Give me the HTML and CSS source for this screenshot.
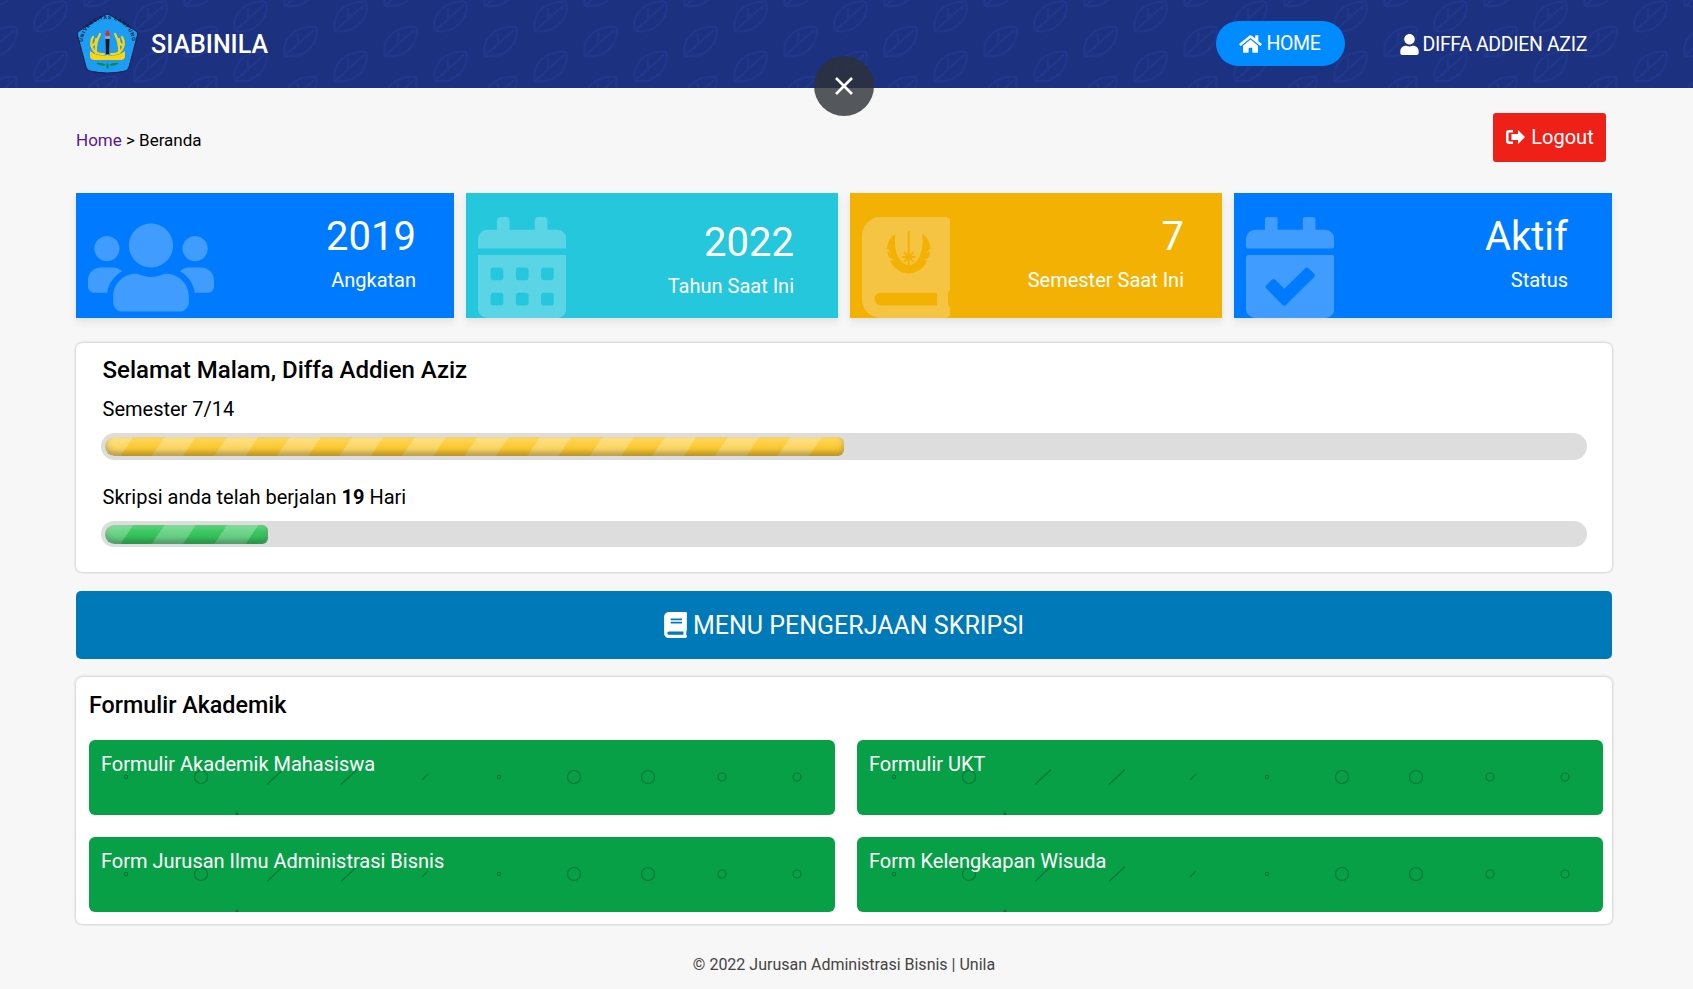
FILE: index.html
```html
<!DOCTYPE html>
<html lang="id">
<head>
<meta charset="utf-8">
<title>SIABINILA</title>
<link rel="stylesheet" href="styles.css">
</head>
<body>
<header class="topbar">
  <div class="brand">
    <svg class="logo" viewBox="0 0 63 62">
      <path d="M29 2Q31.500 0.500 34 2L60 18Q62 19.500 61.500 22L53 54Q52 57.500 49 58Q31.500 62 14 58Q11 57.500 10 54L1.500 22Q1 19.500 3 18Z" fill="#1c9cf2" stroke="#14204a" stroke-width="1"/>
      <defs><path id="logoArc" d="M7.500 38A25 25 0 1 1 55.500 38"/></defs>
      <text class="logo-text"><textPath href="#logoArc" startOffset="50%" text-anchor="middle">UNIVERSITAS LAMPUNG</textPath></text>
      <path class="antler" d="M28 41Q18 42 15.500 33Q14.500 28 17 24M20 40Q19 30 24 21M16 33Q20 31 20 26M35 41Q45 42 47.500 33Q48.500 28 46 24M43 40Q44 30 39 21M47 33Q43 31 43 26"/>
      <path d="M14 38Q22 44 31.500 42Q41 44 49 38V44Q48 47 45 47H18Q15 47 14 44Z" fill="#fbd512"/>
      <path d="M29.500 26H33.500L33 41H30Z" fill="#15181f"/>
      <rect x="29" y="23" width="5" height="3" fill="#8aa6b8"/>
      <path d="M31.500 17Q34.500 20 33 23H30Q28.500 20 31.500 17Z" fill="#e3262b"/>
      <path d="M20 50Q26 49 30 52Q25 54 20 50ZM43 50Q37 49 33 52Q38 54 43 50ZM31.500 50Q34 53 31.500 56Q29 53 31.500 50Z" fill="#118a38"/>
    </svg>
    <span class="brand-name">SIABINILA</span>
  </div>
  <nav class="nav">
    <a class="nav-item nav-active">
      <svg class="nav-icon home-icon" viewBox="0 0 576 512"><path d="M280.370 148.260L96 300.110V464a16 16 0 0 0 16 16l112.060-.29a16 16 0 0 0 15.920-16V368a16 16 0 0 1 16-16h64a16 16 0 0 1 16 16v95.640a16 16 0 0 0 16 16.050L464 480a16 16 0 0 0 16-16V300L295.670 148.260a12.190 12.190 0 0 0-15.300 0zM571.600 251.470L488 182.560V44.050a12 12 0 0 0-12-12h-56a12 12 0 0 0-12 12v72.610L318.470 43a48 48 0 0 0-61 0L4.340 251.470a12 12 0 0 0-1.600 16.900l25.500 31A12 12 0 0 0 45.150 301l235.220-193.740a12.190 12.190 0 0 1 15.300 0L530.900 301a12 12 0 0 0 16.900-1.600l25.500-31a12 12 0 0 0-1.700-16.930z"/></svg>HOME
    </a>
    <a class="nav-item nav-user">
      <svg class="nav-icon user-icon" viewBox="0 0 448 512"><path d="M224 256c70.700 0 128-57.300 128-128S294.700 0 224 0 96 57.300 96 128s57.300 128 128 128zm89.600 32h-16.700c-22.200 10.200-46.900 16-72.900 16s-50.600-5.800-72.900-16h-16.700C60.200 288 0 348.200 0 422.400V464c0 26.500 21.500 48 48 48h352c26.500 0 48-21.500 48-48v-41.600c0-74.200-60.200-134.400-134.400-134.400z"/></svg>DIFFA ADDIEN AZIZ
    </a>
  </nav>
</header>
<button class="close-btn" aria-label="Tutup">
  <svg class="close-icon" viewBox="0 0 18 18"><path d="M1 1L17 17M17 1L1 17"/></svg>
</button>

<main class="page">
  <div class="crumb-row">
    <div class="crumb"><a class="crumb-link">Home</a> &gt; Beranda</div>
    <a class="logout">
      <svg class="logout-icon" viewBox="0 0 20 16"><path d="M8 1H4a3 3 0 0 0-3 3v8a3 3 0 0 0 3 3h4v-2.500H4.500a1 1 0 0 1-1-1v-7a1 1 0 0 1 1-1H8z"/><path d="M13 1l7 7-7 7v-4H6.500V5H13z"/></svg>Logout
    </a>
  </div>

  <section class="stats">
    <div class="stat stat-blue">
      <svg class="stat-icon icon-users" viewBox="0 0 640 512"><path d="M96 224c35.300 0 64-28.700 64-64s-28.700-64-64-64-64 28.700-64 64 28.700 64 64 64zm448 0c35.300 0 64-28.700 64-64s-28.700-64-64-64-64 28.700-64 64 28.700 64 64 64zm32 32h-64c-17.600 0-33.500 7.100-45.100 18.600 40.300 22.100 68.900 62 75.100 109.400h66c17.700 0 32-14.300 32-32v-32c0-35.300-28.700-64-64-64zm-256 0c61.900 0 112-50.100 112-112S381.900 32 320 32 208 82.100 208 144s50.100 112 112 112zm76.800 32h-8.300c-20.800 10-43.900 16-68.500 16s-47.600-6-68.500-16h-8.300C179.600 288 128 339.600 128 403.200V432c0 26.500 21.500 48 48 48h288c26.500 0 48-21.500 48-48v-28.800c0-63.600-51.600-115.200-115.200-115.200zm-223.700-13.400C161.500 263.100 145.600 256 128 256H64c-35.300 0-64 28.700-64 64v32c0 17.700 14.300 32 32 32h65.900c6.300-47.400 34.900-87.300 75.200-109.400z"/></svg>
      <div class="stat-text"><div class="stat-num">2019</div><div class="stat-label">Angkatan</div></div>
    </div>
    <div class="stat stat-cyan">
      <svg class="stat-icon icon-book" viewBox="0 0 448 512"><path d="M0 464c0 26.500 21.500 48 48 48h352c26.500 0 48-21.500 48-48V192H0v272zm320-196c0-6.600 5.400-12 12-12h40c6.600 0 12 5.400 12 12v40c0 6.600-5.400 12-12 12h-40c-6.600 0-12-5.400-12-12v-40zm0 128c0-6.600 5.400-12 12-12h40c6.600 0 12 5.400 12 12v40c0 6.600-5.400 12-12 12h-40c-6.600 0-12-5.400-12-12v-40zM192 268c0-6.600 5.400-12 12-12h40c6.600 0 12 5.400 12 12v40c0 6.600-5.400 12-12 12h-40c-6.600 0-12-5.400-12-12v-40zm0 128c0-6.600 5.400-12 12-12h40c6.600 0 12 5.400 12 12v40c0 6.600-5.400 12-12 12h-40c-6.600 0-12-5.400-12-12v-40zM64 268c0-6.600 5.400-12 12-12h40c6.600 0 12 5.400 12 12v40c0 6.600-5.400 12-12 12H76c-6.600 0-12-5.400-12-12v-40zm0 128c0-6.600 5.400-12 12-12h40c6.600 0 12 5.400 12 12v40c0 6.600-5.400 12-12 12H76c-6.600 0-12-5.400-12-12v-40zM400 64h-48V16c0-8.800-7.200-16-16-16h-32c-8.800 0-16 7.200-16 16v48H160V16c0-8.800-7.200-16-16-16h-32c-8.800 0-16 7.200-16 16v48H48C21.500 64 0 85.500 0 112v48h448v-48c0-26.500-21.500-48-48-48z"/></svg>
      <div class="stat-text stat-text-low"><div class="stat-num">2022</div><div class="stat-label">Tahun Saat Ini</div></div>
    </div>
    <div class="stat stat-amber">
      <svg class="stat-icon icon-book" viewBox="0 0 448 512">
        <path fill-rule="evenodd" d="M448 358.400V25.600C448 9.600 438.400 0 422.400 0H96C41.600 0 0 41.600 0 96v320c0 54.400 41.600 96 96 96h326.400c12.800 0 25.600-9.600 25.600-25.600v-16c0-6.400-3.200-12.800-9.600-19.200-3.200-16-3.200-60.800 0-73.600 6.400-3.200 9.600-9.600 9.600-19.200zM380 448H96c-17.600 0-32-14.400-32-32s14.400-32 32-32h284z"/>
        <path class="emblem" d="M170 88C140 105 130 130 127 160L152 184L130 172C128 185 132 197 140 208L164 218L143 220C160 262 200 286 237 286C274 286 314 262 331 220L310 218L334 208C342 197 346 185 344 172L322 184L347 160C344 130 334 105 304 88C316 150 298 232 237 246C176 232 158 150 170 88Z"/>
        <path class="emblem-line" d="M237 72V258M203 203H271M213 179L261 227M261 179L213 227"/>
      </svg>
      <div class="stat-text"><div class="stat-num">7</div><div class="stat-label">Semester Saat Ini</div></div>
    </div>
    <div class="stat stat-blue stat-status">
      <svg class="stat-icon icon-book" viewBox="0 0 448 512"><path d="M436 160H12c-6.600 0-12-5.400-12-12v-36c0-26.500 21.500-48 48-48h48V12c0-6.600 5.400-12 12-12h40c6.600 0 12 5.400 12 12v52h128V12c0-6.600 5.400-12 12-12h40c6.600 0 12 5.400 12 12v52h48c26.500 0 48 21.500 48 48v36c0 6.600-5.400 12-12 12zM12 192h424c6.600 0 12 5.400 12 12v260c0 26.500-21.500 48-48 48H48c-26.500 0-48-21.500-48-48V204c0-6.600 5.400-12 12-12zm333.300 95.900l-28.200-28.400c-4.700-4.700-12.300-4.800-17-.1L194.500 364.300l-46.200-46.600c-4.700-4.700-12.300-4.800-17-.1l-28.400 28.200c-4.700 4.700-4.800 12.300-.1 17l82.600 83.300c4.700 4.700 12.300 4.800 17 .1l143-141.900c4.700-4.700 4.700-12.300 0-17z"/></svg>
      <div class="stat-text"><div class="stat-num">Aktif</div><div class="stat-label">Status</div></div>
    </div>
  </section>

  <section class="panel progress-panel">
    <h2 class="greeting">Selamat Malam, Diffa Addien Aziz</h2>
    <p class="meter-label">Semester 7/14</p>
    <div class="meter"><span class="meter-fill fill-yellow"></span></div>
    <p class="meter-label meter-label-next">Skripsi anda telah berjalan <b>19</b> Hari</p>
    <div class="meter"><span class="meter-fill fill-green"></span></div>
  </section>

  <a class="menu-btn">
    <svg class="menu-icon" viewBox="0 0 448 512"><path d="M448 360V24c0-13.300-10.700-24-24-24H96C43 0 0 43 0 96v320c0 53 43 96 96 96h328c13.300 0 24-10.700 24-24v-16c0-7.500-3.500-14.300-8.900-18.700-4.200-15.400-4.200-59.300 0-74.700 5.400-4.300 8.900-11.100 8.900-18.600zM128 134c0-3.300 2.700-6 6-6h212c3.300 0 6 2.700 6 6v20c0 3.300-2.700 6-6 6H134c-3.300 0-6-2.700-6-6v-20zm0 64c0-3.300 2.700-6 6-6h212c3.300 0 6 2.700 6 6v20c0 3.300-2.700 6-6 6H134c-3.300 0-6-2.700-6-6v-20zm253.400 250H96c-17.700 0-32-14.300-32-32 0-17.600 14.400-32 32-32h285.400c-1.900 17.100-1.900 46.900 0 64z"/></svg>MENU PENGERJAAN SKRIPSI
  </a>

  <section class="panel forms-panel">
    <h2 class="forms-title">Formulir Akademik</h2>
    <div class="forms-grid">
      <a class="form-card">Formulir Akademik Mahasiswa</a>
      <a class="form-card">Formulir UKT</a>
      <a class="form-card">Form Jurusan Ilmu Administrasi Bisnis</a>
      <a class="form-card">Form Kelengkapan Wisuda</a>
    </div>
  </section>

  <footer class="foot">© 2022 Jurusan Administrasi Bisnis | Unila</footer>
</main>
</body>
</html>
```
FILE: styles.css
```css
* { box-sizing: border-box; }
html, body { margin: 0; padding: 0; background: #f7f7f7; }
body { font-family: Roboto, "Liberation Sans", sans-serif; color: #000; overflow: hidden; height: 989px; }

.topbar {
  height: 88px;
  background-color: #1c3180;
  background-image: url("data:image/svg+xml,%3Csvg xmlns='http://www.w3.org/2000/svg' width='100' height='50'%3E%3Cdefs%3E%3Cg id='l' fill='none' stroke='%2320378c' stroke-width='2.200'%3E%3Cpath d='M-15 15C-19 -3 -3 -16 16 -14C20 3 4 18 -15 15Z'/%3E%3Cpath d='M-14 14L14 -11M-2 -8V3'/%3E%3C/g%3E%3C/defs%3E%3Cuse href='%23l' x='50' y='16'/%3E%3Cuse href='%23l' x='0' y='41'/%3E%3Cuse href='%23l' x='100' y='41'/%3E%3Cuse href='%23l' x='0' y='-9'/%3E%3Cuse href='%23l' x='100' y='-9'/%3E%3C/svg%3E");
  display: flex;
  align-items: center;
  justify-content: space-between;
  padding: 0 106px 0 76px;
}
.brand { display: flex; align-items: center; gap: 12px; }
.logo { width: 63px; height: 62px; display: block; }
.logo-text { font-family: "Liberation Sans", sans-serif; font-size: 5px; font-weight: 700; letter-spacing: .75px; fill: #10182e; }
.antler { fill: none; stroke: #fbd512; stroke-width: 2.200; stroke-linecap: round; }
.brand-name { color: #fff; font-size: 25px; font-weight: 500; }
.nav { display: flex; align-items: center; gap: 55px; }
.nav-item { display: flex; align-items: center; color: #fff; font-size: 19.500px; letter-spacing: -.35px; }
.nav-active { background: #008cff; height: 45px; width: 129px; border-radius: 23px; justify-content: center; margin-top: -1px; }
.nav-icon { fill: #fff; display: block; }
.home-icon { width: 23px; height: 20px; margin-right: 4px; }
.user-icon { width: 19px; height: 21px; margin-right: 4px; }

.close-btn {
  position: absolute;
  left: 814px;
  top: 56px;
  width: 60px;
  height: 60px;
  border: 0;
  padding: 0;
  border-radius: 50%;
  background: rgba(45, 49, 56, .81);
  display: flex;
  align-items: center;
  justify-content: center;
}
.close-icon { width: 18px; height: 18px; stroke: #fff; stroke-width: 2.600; fill: none; display: block; }

.page { width: 1536px; margin-left: 76px; }
.crumb-row { display: flex; justify-content: space-between; align-items: center; padding: 25px 6px 0 0; height: 74px; }
.crumb { font-size: 17px; margin-top: 4px; }
.crumb-link { color: #551a8b; }
.logout { display: flex; align-items: center; justify-content: center; width: 113px; height: 49px; padding-bottom: 2px; background: #ee2018; border-radius: 3px; color: #fff; font-size: 20px; }
.logout-icon { width: 20px; height: 16px; fill: #fff; margin-right: 6px; display: block; }

.stats { display: grid; grid-template-columns: 378fr 372fr 372fr 378fr; gap: 12px; margin-top: 31px; }
.stat { height: 125px; display: flex; justify-content: space-between; padding: 24px 38px 0 12px; overflow: hidden; color: #fff; box-shadow: 0 4px 8px rgba(0, 0, 0, .09); }
.stat-blue { background: #007bff; }
.stat-status { padding-right: 44px; }
.stat-cyan { background: #25c7dc; padding-right: 44px; }
.stat-amber { background: #f3b104; }
.stat-icon { fill: rgba(255, 255, 255, .25); display: block; flex: none; height: 101px; }
.icon-users { width: 126px; }
.icon-book { width: 88.400px; }
.emblem { fill: #f3b104; }
.emblem-line { fill: none; stroke: #f3b104; stroke-width: 10; }
.stat-text { text-align: right; margin-top: -4px; }
.stat-text-low { margin-top: 2px; }
.stat-num { font-size: 40px; line-height: 48px; }
.stat-label { font-size: 20px; line-height: 30px; margin-top: 4px; }

.panel { background: #fff; border-radius: 6px; box-shadow: 0 0 3px rgba(0, 0, 0, .3); }
.progress-panel { margin-top: 25px; height: 229px; padding: 12px 25px 0; }
.greeting { margin: 0; padding-left: 1.500px; font-size: 24px; line-height: 30px; font-weight: 500; }
.meter-label { margin: 11px 0 11px; padding-left: 1.500px; font-size: 20px; line-height: 26px; }
.meter-label-next { margin-top: 24px; }
.meter-label b { font-weight: 700; }
.meter { height: 26.500px; background: #ddd; border-radius: 14px; padding: 4px; }
.meter-fill {
  display: block;
  height: 19px;
  border-radius: 10px 6px 6px 10px;
  background-size: 62.600px 91.500px, auto;
  background-position: -3px 0, 0 0;
  box-shadow: inset 0 2px 7px rgba(255, 255, 255, .3), inset 0 -3px 6px rgba(0, 0, 0, .35);
}
.fill-yellow {
  width: 50%;
  background-image: linear-gradient(to bottom right, rgba(255, 255, 255, .25) 25%, transparent 25%, transparent 50%, rgba(255, 255, 255, .25) 50%, rgba(255, 255, 255, .25) 75%, transparent 75%), linear-gradient(#ffd244, #f8c42a);
}
.fill-green {
  width: 11%;
  background-image: linear-gradient(to bottom right, rgba(255, 255, 255, .25) 25%, transparent 25%, transparent 50%, rgba(255, 255, 255, .25) 50%, rgba(255, 255, 255, .25) 75%, transparent 75%), linear-gradient(#3ccb62, #30bd58);
}

.menu-btn { display: flex; align-items: center; justify-content: center; height: 68px; margin-top: 19px; background: #0079b8; border-radius: 5px; color: #fff; font-size: 25px; }
.menu-icon { width: 23px; height: 26px; fill: #fff; margin-right: 6px; display: block; }

.forms-panel { margin-top: 18px; height: 247px; padding: 13px 9px 12px 13px; }
.forms-title { margin: 0 0 20px; font-size: 23.300px; line-height: 30px; font-weight: 500; }
.forms-grid { display: grid; grid-template-columns: 1fr 1fr; gap: 22px; }
.form-card {
  display: block;
  height: 75px;
  padding: 12px 12px;
  border-radius: 6px;
  color: #fff;
  font-size: 20px;
  line-height: 24px;
  background-color: #08a047;
  background-repeat: no-repeat;
  background-position: left top;
  background-image: url("data:image/svg+xml,%3Csvg xmlns='http://www.w3.org/2000/svg' width='746' height='75' fill='none' stroke='%23067534' stroke-width='1.100'%3E%3Ccircle cx='37' cy='37' r='1.700'/%3E%3Ccircle cx='112' cy='37' r='6.500'/%3E%3Cpath d='M178 44.500L194 29.500M252 44.500L268 29.500M333 40L339 34'/%3E%3Ccircle cx='410' cy='37' r='1.700'/%3E%3Ccircle cx='485' cy='37' r='6.500'/%3E%3Ccircle cx='559' cy='37' r='6.500'/%3E%3Ccircle cx='633' cy='37' r='4'/%3E%3Ccircle cx='708' cy='37' r='4'/%3E%3Cpath d='M146 75L148 72L150 75Z' fill='%23067534' stroke='none'/%3E%3C/svg%3E");
}
.foot { margin-top: 29px; text-align: center; font-size: 16px; line-height: 24px; color: #444; }
```
